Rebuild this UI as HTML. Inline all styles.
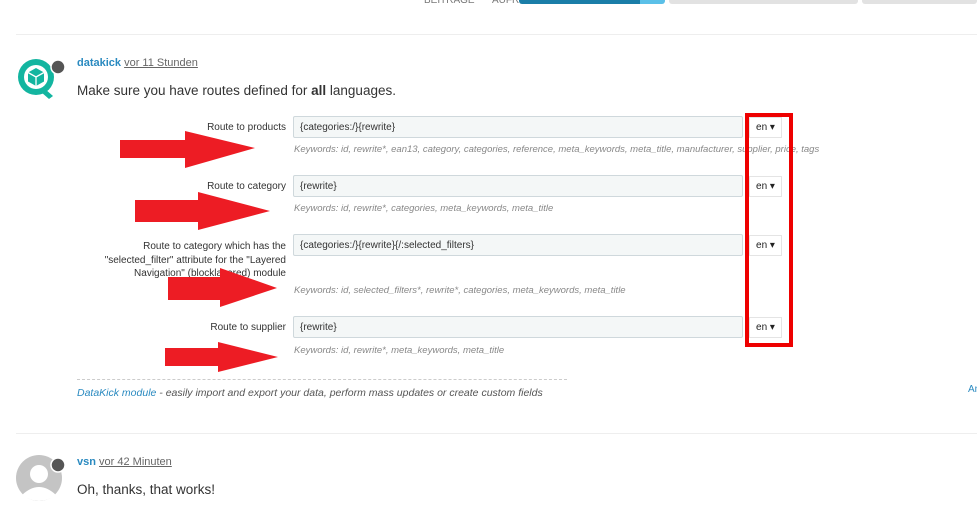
<!DOCTYPE html>
<html><head><meta charset="utf-8"><style>
body{margin:0;width:977px;height:505px;overflow:hidden;background:#fff;font-family:"Liberation Sans",sans-serif;position:relative}
.a{position:absolute;white-space:nowrap}
.lbl{font-size:10px;color:#333;text-align:right;width:200px;left:86px}
.inp{position:absolute;left:293px;height:22px;background:#f4f7f7;border:1px solid #cfd8dc;border-radius:2px;font-size:10px;color:#333;line-height:21px;padding-left:6px;box-sizing:border-box;width:450px}
.kw{font-size:9.5px;color:#888;font-style:italic;left:294px}
.btn{position:absolute;left:749px;width:33px;height:21px;border:1px solid #e4e4e4;background:#fff;font-size:10px;line-height:20px;text-align:center;box-sizing:border-box;color:#222}
</style></head><body>
<div class="a" style="left:424px;top:-5px;font-size:10px;color:#777">BEITRÄGE</div>
<div class="a" style="left:492px;top:-5px;font-size:10px;color:#777">AUFRUFE</div>
<div class="a" style="left:519px;top:0;width:121px;height:4px;background:#1a7ea8;border-radius:0 0 0 3px"></div>
<div class="a" style="left:640px;top:0;width:25px;height:4px;background:#5bc0e8;border-radius:0 0 3px 0"></div>
<div class="a" style="left:669px;top:0;width:189px;height:4px;background:#e2e2e2;border-radius:0 0 3px 3px"></div>
<div class="a" style="left:862px;top:0;width:115px;height:4px;background:#e2e2e2;border-radius:0 0 3px 3px"></div>
<div class="a" style="left:16px;top:34px;width:961px;height:1px;background:#eee"></div>

<svg class="a" style="left:16px;top:56px" width="50" height="46">
<circle cx="20" cy="21" r="18" fill="#13b5a0"/><circle cx="20" cy="21" r="12" fill="#fff"/>
<path d="M29 33 L37 40 L33 43 L25 36Z" fill="#13b5a0"/>
<path d="M20 12 L28 16.5 L28 25.5 L20 30 L12 25.5 L12 16.5Z" fill="#13b5a0"/>
<path d="M12 16.5 L20 21 L28 16.5 M20 21 L20 30" stroke="#fff" stroke-width="1.3" fill="none"/>
<circle cx="42" cy="11" r="7" fill="#555" stroke="#fff" stroke-width="1.5"/></svg>
<div class="a" style="left:77px;top:57px;font-size:11px"><b style="color:#2a8ac0">datakick</b> <u style="color:#666">vor 11 Stunden</u></div>
<div class="a" style="left:77px;top:83px;font-size:13.5px;color:#333">Make sure you have routes defined for <b>all</b> languages.</div>

<div class="a lbl" style="top:122px">Route to products</div>
<div class="inp" style="top:116px">{categories:/}{rewrite}</div>
<div class="a kw" style="top:144px">Keywords: id, rewrite*, ean13, category, categories, reference, meta_keywords, meta_title, manufacturer, supplier, price, tags</div>
<div class="btn" style="top:117px">en ▾</div>

<div class="a lbl" style="top:181px">Route to category</div>
<div class="inp" style="top:175px">{rewrite}</div>
<div class="a kw" style="top:203px">Keywords: id, rewrite*, categories, meta_keywords, meta_title</div>
<div class="btn" style="top:176px">en ▾</div>

<div class="a lbl" style="top:240px;line-height:13.5px">Route to category which has the<br>"selected_filter" attribute for the "Layered<br>Navigation" (blocklayered) module</div>
<div class="inp" style="top:234px">{categories:/}{rewrite}{/:selected_filters}</div>
<div class="a kw" style="top:285px">Keywords: id, selected_filters*, rewrite*, categories, meta_keywords, meta_title</div>
<div class="btn" style="top:235px">en ▾</div>

<div class="a lbl" style="top:322px">Route to supplier</div>
<div class="inp" style="top:316px">{rewrite}</div>
<div class="a kw" style="top:345px">Keywords: id, rewrite*, meta_keywords, meta_title</div>
<div class="btn" style="top:317px">en ▾</div>

<div class="a" style="left:745px;top:113px;width:40px;height:226px;border:4px solid #e00"></div>

<svg class="a" style="left:0;top:0" width="300" height="380">
<g fill="#ed1c24">
<polygon points="120,140 185,140 185,131 255,148 185,168 185,158 120,158"/>
<polygon points="135,200 198,200 198,192 270,211 198,230 198,222 135,222"/>
<polygon points="168,277 220,277 220,268 277,288 220,307 220,300 168,300"/>
<polygon points="165,348 218,348 218,342 278,357 218,372 218,366 165,366"/>
</g></svg>

<div class="a" style="left:77px;top:379px;width:490px;border-top:1px dashed #ccc"></div>
<div class="a" style="left:77px;top:387px;font-size:10.5px;font-style:italic;color:#555"><span style="color:#2a8ac0">DataKick module</span> - easily import and export your data, perform mass updates or create custom fields</div>
<div class="a" style="left:968px;top:384px;font-size:10px;color:#2a8ac0">An</div>
<div class="a" style="left:16px;top:433px;width:961px;height:1px;background:#eee"></div>

<svg class="a" style="left:16px;top:455px" width="50" height="50">
<circle cx="23" cy="23" r="23" fill="#c4c4c4"/>
<circle cx="23" cy="19" r="9" fill="#fff"/>
<path d="M6 40 Q23 24 40 40 Q23 52 6 40Z" fill="#fff"/>
<circle cx="42" cy="10" r="7" fill="#555" stroke="#fff" stroke-width="1.5"/></svg>
<div class="a" style="left:77px;top:456px;font-size:11px"><b style="color:#2a8ac0">vsn</b> <u style="color:#666">vor 42 Minuten</u></div>
<div class="a" style="left:77px;top:482px;font-size:13.5px;color:#333">Oh, thanks, that works!</div>
</body></html>
